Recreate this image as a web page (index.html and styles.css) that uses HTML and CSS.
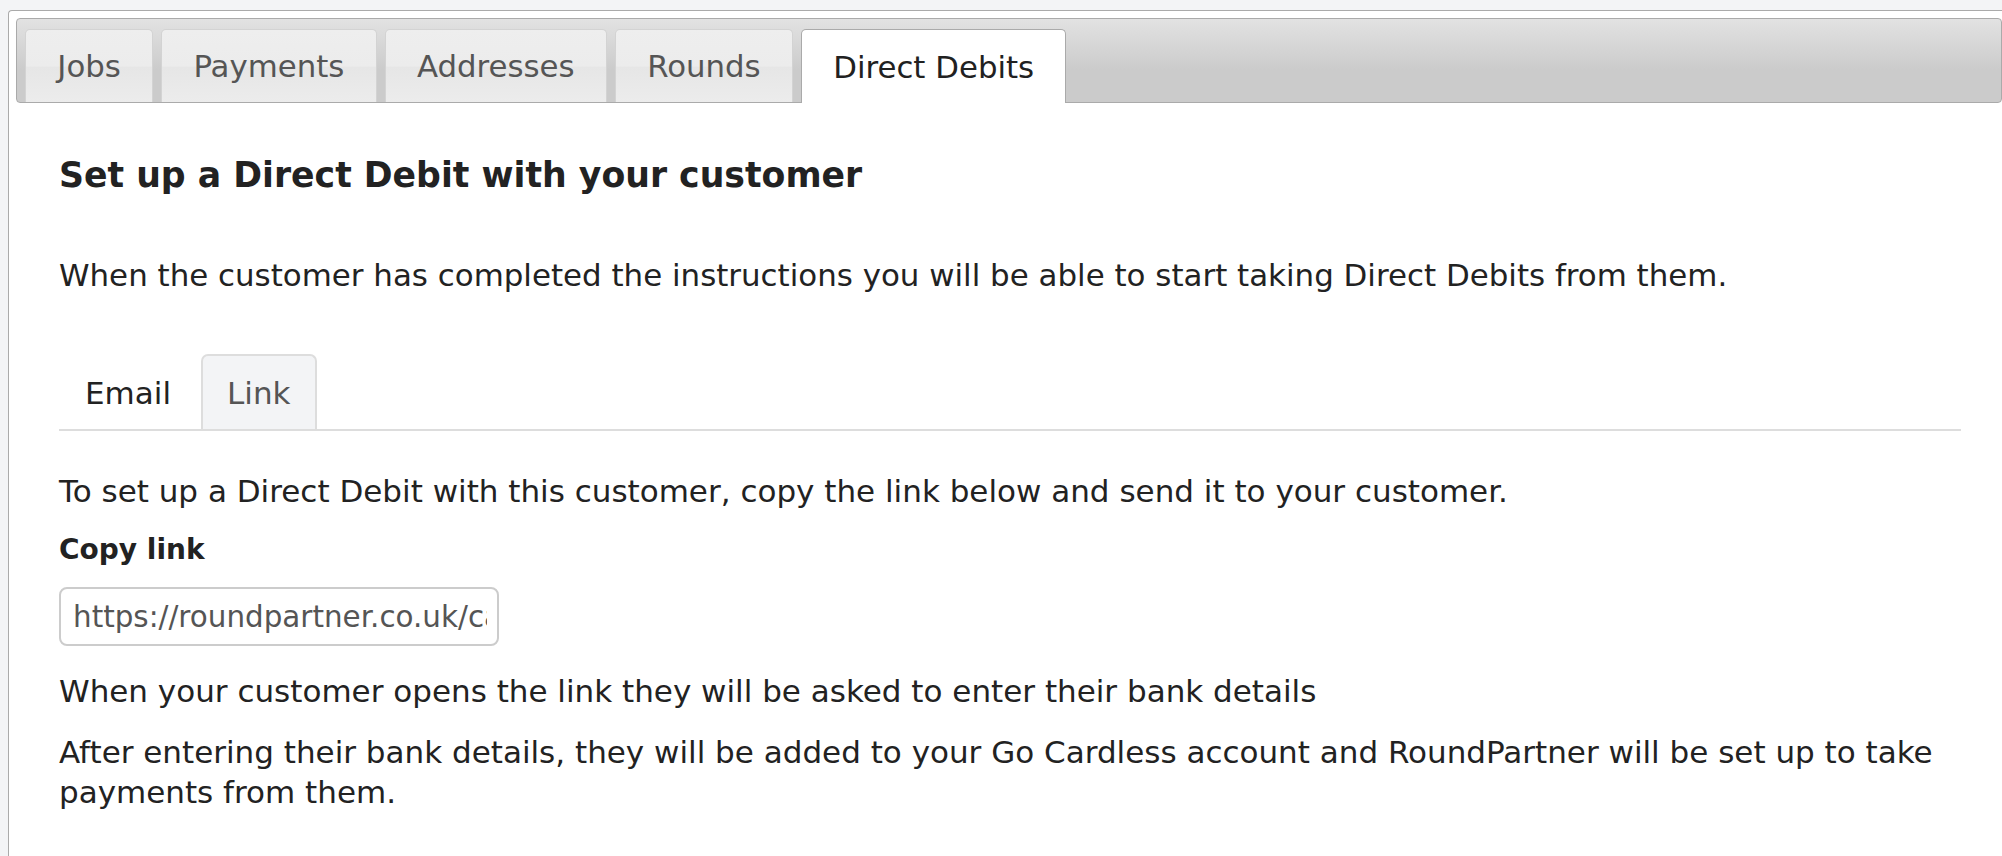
FILE: index.html
```html
<!DOCTYPE html>
<html>
<head>
<meta charset="utf-8">
<title>Direct Debits</title>
<link rel="stylesheet" href="styles.css">
</head>
<body>
<div class="widget">
  <ul class="nav">
    <li class="tab">Jobs</li>
    <li class="tab">Payments</li>
    <li class="tab">Addresses</li>
    <li class="tab">Rounds</li>
    <li class="tab active">Direct Debits</li>
  </ul>
  <div class="panel">
    <h4 class="title">Set up a Direct Debit with your customer</h4>
    <p class="intro">When the customer has completed the instructions you will be able to start taking Direct Debits from them.</p>
    <ul class="subtabs">
      <li class="subtab">Email</li>
      <li class="subtab current">Link</li>
    </ul>
    <p class="text">To set up a Direct Debit with this customer, copy the link below and send it to your customer.</p>
    <label class="label">Copy link</label>
    <input class="field" type="text" readonly value="https://roundpartner.co.uk/capture/direct-debit/abc123">
    <p class="text after-field">When your customer opens the link they will be asked to enter their bank details</p>
    <p class="text">After entering their bank details, they will be added to your Go Cardless account and RoundPartner will be set up to take payments from them.</p>
  </div>
</div>
</body>
</html>
```

FILE: styles.css
```css
html, body {
  margin: 0;
  padding: 0;
  overflow: hidden;
}
body {
  background: #f3f4f6;
  font-family: "DejaVu Sans", Verdana, sans-serif;
  color: #222;
  padding: 10px 0 0 8px;
  height: 856px;
  box-sizing: border-box;
}
.widget {
  height: 846px;
  box-sizing: border-box;
  overflow: hidden;
  background: #fff;
  border: 1px solid #aaa;
  border-right: 0;
  border-bottom: 0;
  border-radius: 4px 0 0 0;
  padding: 7px 0 0 7px;
}
.nav {
  list-style: none;
  margin: 0;
  padding: 10px 8px 0 8px;
  display: flex;
  gap: 8px;
  border: 1px solid #aaa;
  border-radius: 4px;
  background: linear-gradient(to bottom, #e2e2e2 0%, #cbcbcb 62%, #cbcbcb 100%);
}
.tab {
  height: 73px;
  box-sizing: border-box;
  display: flex;
  align-items: center;
  padding: 0 31.3px;
  font-size: 30.8px;
  color: #555;
  border: 1px solid #d3d3d3;
  border-bottom: 0;
  border-radius: 5px 5px 0 0;
  background: linear-gradient(to bottom, #eeeeee 0%, #ececec 50%, #e6e6e6 52%, #ececec 100%);
}
.tab.active {
  height: 74px;
  margin-bottom: -1px;
  background: #fff;
  color: #212121;
  border-color: #aaa;
}
.panel {
  padding: 50px 41px 0 43px;
}
.title {
  margin: 0;
  font-size: 34.7px;
  line-height: 44px;
  font-weight: bold;
  color: #222;
}
.intro {
  margin: 58px 0 0 0;
  font-size: 30.9px;
  line-height: 40px;
}
.subtabs {
  list-style: none;
  margin: 59px 0 0 0;
  padding: 0;
  display: flex;
  gap: 4px;
  border-bottom: 2px solid #ddd;
}
.subtab {
  font-size: 31px;
  line-height: 40px;
  padding: 18px 25px 16px 25px;
  border: 1px solid transparent;
  border-bottom: 0;
  border-radius: 7px 7px 0 0;
  color: #222;
}
.subtab.current {
  background: #f3f4f6;
  border: 2px solid #ddd;
  border-bottom: 0;
  padding: 17px 24px 16px 24px;
  color: #555;
}
.text {
  margin: 40px 0 0 0;
  font-size: 31px;
  line-height: 40px;
}
.label {
  display: block;
  margin-top: 19px;
  font-size: 28px;
  line-height: 40px;
  font-weight: bold;
}
.field {
  display: block;
  margin: 17px 0 0 0;
  width: 440px;
  height: 59px;
  box-sizing: border-box;
  border: 2px solid #ccc;
  border-radius: 8px;
  padding: 0 10px 0 12px;
  font-family: "DejaVu Sans", Verdana, sans-serif;
  font-size: 29.4px;
  color: #555;
  background: #fff;
  outline: none;
}
.text + .text {
  margin-top: 21px;
}
.text.after-field {
  margin-top: 25px;
}
```
